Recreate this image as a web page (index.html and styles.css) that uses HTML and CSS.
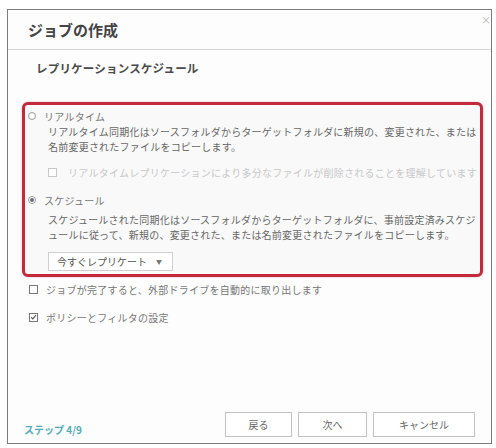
FILE: index.html
```html
<!DOCTYPE html>
<html lang="ja">
<head>
    <meta charset="UTF-8">
    <meta name="viewport" content="width=device-width, initial-scale=1.0">
    <title>ジョブの作成</title>
    <link rel="stylesheet" href="styles.css">
</head>
<body>
    <div class="dialog">
        <span class="close">×</span>
        <div class="dialog-header">ジョブの作成</div>

        <div class="dialog-body">
            <div class="subtitle">レプリケーションスケジュール</div>

            <div class="highlight-box">
                <div class="option-row">
                    <span class="radio"></span>
                    <span class="option-label">リアルタイム</span>
                </div>
                <p class="desc">リアルタイム同期化はソースフォルダからターゲットフォルダに新規の、変更された、または<br>名前変更されたファイルをコピーします。</p>
                <div class="option-row sub disabled">
                    <span class="checkbox"></span>
                    <span class="option-label">リアルタイムレプリケーションにより多分なファイルが削除されることを理解しています</span>
                </div>

                <div class="option-row second">
                    <span class="radio checked"></span>
                    <span class="option-label">スケジュール</span>
                </div>
                <p class="desc desc-second">スケジュールされた同期化はソースフォルダからターゲットフォルダに、事前設定済みスケジ<br>ュールに従って、新規の、変更された、または名前変更されたファイルをコピーします。</p>
                <div class="select-box">
                    <span>今すぐレプリケート</span>
                    <span class="caret">▼</span>
                </div>
            </div>

            <div class="option-row outer">
                <span class="checkbox"></span>
                <span class="option-label">ジョブが完了すると、外部ドライブを自動的に取り出します</span>
            </div>
            <div class="option-row outer second-check">
                <span class="checkbox checked">
                    <svg viewBox="0 0 8 8" width="8" height="8"><path d="M1.2 4.2 L3.2 6.2 L6.8 1.8" fill="none" stroke="#555" stroke-width="1.3"/></svg>
                </span>
                <span class="option-label">ポリシーとフィルタの設定</span>
            </div>
        </div>

        <div class="dialog-footer">
            <span class="step">ステップ 4/9</span>
            <div class="buttons">
                <button class="btn btn-back">戻る</button>
                <button class="btn btn-next">次へ</button>
                <button class="btn btn-cancel">キャンセル</button>
            </div>
        </div>
    </div>
</body>
</html>
```

FILE: styles.css
```css
* {
    margin: 0;
    padding: 0;
    box-sizing: border-box;
}

body {
    font-family: "Noto Sans CJK JP", "Noto Sans", sans-serif;
    background: #ffffff;
    color: #666;
    width: 496px;
    height: 448px;
    overflow: hidden;
}

.dialog {
    position: relative;
    margin: 9px 0 0 7px;
    width: 485px;
    height: 435px;
    border: 1px solid #7d7d7d;
    background: #fdfdfd;
    display: flex;
    flex-direction: column;
}

.close {
    position: absolute;
    top: 5px;
    right: 0;
    font-size: 10px;
    line-height: 10px;
    color: #b5b5b5;
}

.dialog-header {
    height: 40px;
    line-height: 39px;
    padding-left: 20px;
    border-bottom: 1px solid #d4d4d4;
    font-size: 15px;
    font-weight: bold;
    color: #444;
}

.dialog-body {
    padding: 10px 8px 0 14px;
}

.subtitle {
    padding-left: 14px;
    font-size: 11.5px;
    line-height: 16px;
    font-weight: bold;
    color: #4a4a4a;
    letter-spacing: 0.2px;
}

.highlight-box {
    margin-top: 26px;
    width: 461px;
    height: 175px;
    border: 3px solid #c3293a;
    border-radius: 6px;
    background: #f9f9f9;
    box-shadow: 0 0 2px rgba(120, 20, 30, 0.35);
    padding: 3px 0 0 3px;
}

.option-row {
    display: flex;
    align-items: center;
    height: 16px;
    font-size: 10px;
    letter-spacing: 0.25px;
    color: #777;
}

.option-label {
    white-space: nowrap;
}

.radio {
    width: 8px;
    height: 8px;
    border: 1px solid #999;
    border-radius: 50%;
    background: #fff;
    margin-right: 8px;
    display: flex;
    align-items: center;
    justify-content: center;
}

.radio.checked::after {
    content: "";
    width: 4px;
    height: 4px;
    border-radius: 50%;
    background: #6a6f86;
}

.desc {
    padding-left: 20px;
    font-size: 10px;
    line-height: 15px;
    letter-spacing: 0.22px;
    color: #666;
    white-space: nowrap;
}

.checkbox {
    width: 9px;
    height: 9px;
    border: 1px solid #777;
    background: #fff;
    display: flex;
    align-items: center;
    justify-content: center;
}

.option-row.sub {
    margin-top: 10px;
    padding-left: 20px;
}

.option-row.sub .checkbox {
    margin-right: 11px;
}

.option-row.disabled {
    color: #c8c8c8;
}

.option-row.disabled .checkbox {
    border-color: #c8c8c8;
}

.option-row.second {
    margin-top: 12px;
}

.desc-second {
    margin-top: 4px;
}

.select-box {
    margin: 10px 0 0 20px;
    width: 125px;
    height: 19px;
    border: 1px solid #d0d0d0;
    background: #fff;
    display: flex;
    align-items: center;
    justify-content: space-between;
    padding: 0 10px 0 8px;
    font-size: 10px;
    color: #555;
}

.caret {
    font-size: 6px;
    color: #777;
}

.option-row.outer {
    margin-top: 4px;
    padding-left: 7px;
}

.option-row.outer .checkbox {
    margin-right: 8px;
}

.option-row.second-check {
    margin-top: 12px;
}

.dialog-footer {
    margin-top: auto;
    display: flex;
    justify-content: space-between;
    align-items: flex-end;
    padding: 0 16px 6px 16px;
}

.step {
    font-size: 10px;
    line-height: 14px;
    font-weight: bold;
    color: #52adb7;
}

.buttons {
    display: flex;
    gap: 6px;
}

.btn {
    height: 25px;
    border: 1px solid #c2c2c2;
    background: #fff;
    font-family: inherit;
    font-size: 10px;
    color: #666;
}

.btn-back {
    width: 67px;
}

.btn-next {
    width: 69px;
}

.btn-cancel {
    width: 102px;
}
```
